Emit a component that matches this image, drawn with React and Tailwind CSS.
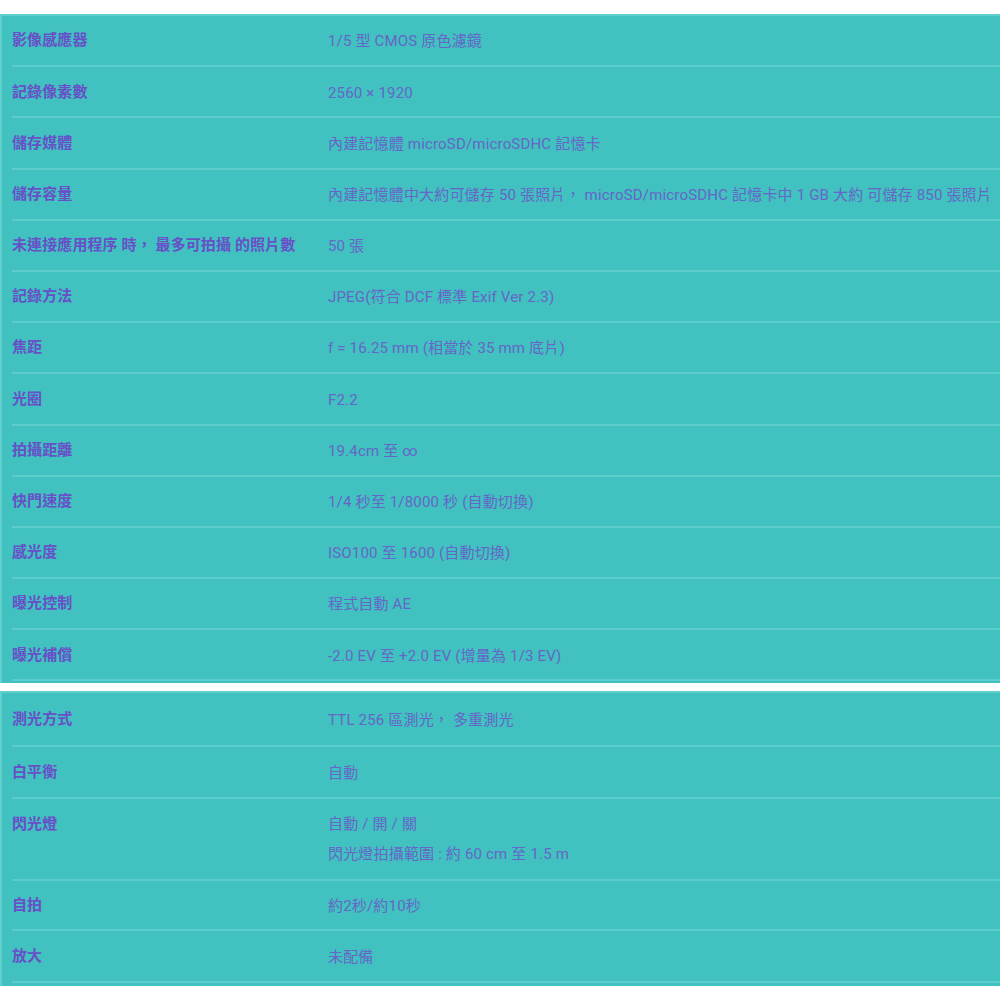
import React from "react";

const rows1 = [
  ["影像感應器", "1/5 型 CMOS 原色濾鏡"],
  ["記錄像素數", "2560 × 1920"],
  ["儲存媒體", "內建記憶體 microSD/microSDHC 記憶卡"],
  ["儲存容量", "內建記憶體中大約可儲存 50 張照片， microSD/microSDHC 記憶卡中 1 GB 大約 可儲存 850 張照片"],
  ["未連接應用程序 時， 最多可拍攝 的照片數", "50 張"],
  ["記錄方法", "JPEG(符合 DCF 標準 Exif Ver 2.3)"],
  ["焦距", "f = 16.25 mm (相當於 35 mm 底片)"],
  ["光圈", "F2.2"],
  ["拍攝距離", "19.4cm 至 ∞"],
  ["快門速度", "1/4 秒至 1/8000 秒 (自動切換)"],
  ["感光度", "ISO100 至 1600 (自動切換)"],
  ["曝光控制", "程式自動 AE"],
  ["曝光補償", "-2.0 EV 至 +2.0 EV (增量為 1/3 EV)"],
];

const font = { fontFamily: "Roboto, 'Noto Sans CJK TC', sans-serif" };

function Row({ label, value, h }) {
  return (
    <div
      className="ml-[10px] flex items-center border-b-2 border-[#5ccdca]"
      style={{ height: h }}
    >
      <div className="w-[316px] shrink-0 text-[15px] font-bold text-[#6750c8] whitespace-nowrap tracking-[0.1px]">
        {label}
      </div>
      <div className="pt-[2px] text-[15px] text-[#6566c8] whitespace-nowrap tracking-[0.18px]">
        {value}
      </div>
    </div>
  );
}

export default function App() {
  return (
    <div className="w-[1000px] h-[1000px] bg-white overflow-hidden" style={font}>
      <div className="h-[14px]" />
      <div className="bg-[#41c1bf] border-t-2 border-l-2 border-[#5fd0cc] pb-[2px]">
        {rows1.map(([l, v], i) => (
          <Row key={i} label={l} value={v} h={51.2} />
        ))}
      </div>
      <div className="h-[8px]" />
      <div className="bg-[#41c1bf] border-t-2 border-l-2 border-[#5fd0cc] pb-[3px]">
        <Row label="測光方式" value="TTL 256 區測光， 多重測光" h={54} />
        <Row label="白平衡" value="自動" h={52} />
        <div className="ml-[10px] flex items-start border-b-2 border-[#5ccdca] h-[82px] pt-[10px]">
          <div className="w-[316px] shrink-0 text-[15px] leading-[30px] font-bold text-[#6750c8] tracking-[0.1px]">
            閃光燈
          </div>
          <div className="text-[15px] leading-[30px] text-[#6566c8] tracking-[0.18px]">
            <div>自動 / 開 / 關</div>
            <div>閃光燈拍攝範圍 : 約 60 cm 至 1.5 m</div>
          </div>
        </div>
        <Row label="自拍" value="約2秒/約10秒" h={50} />
        <Row label="放大" value="未配備" h={52} />
      </div>
    </div>
  );
}
